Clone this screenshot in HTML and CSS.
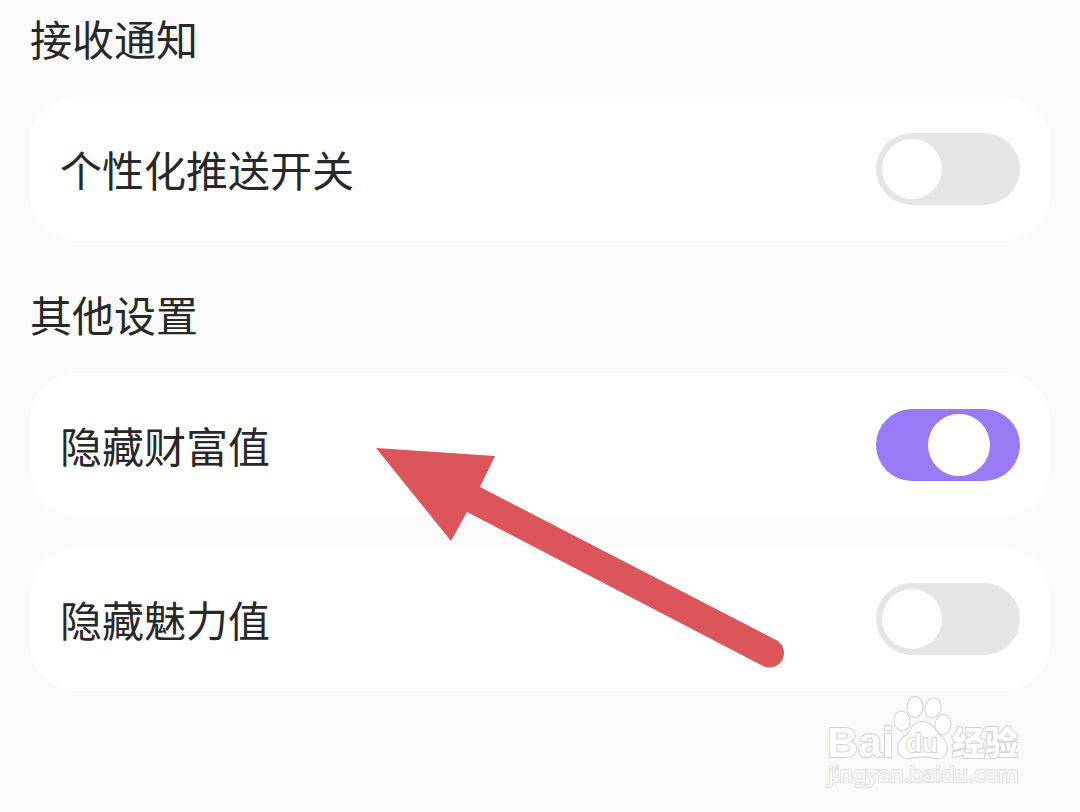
FILE: index.html
```html
<!DOCTYPE html>
<html lang="zh-CN">
<head>
	<meta charset="UTF-8">
	<meta name="viewport" content="width=device-width, initial-scale=1">
	<title>设置</title>
	<link rel="stylesheet" href="styles.css">
</head>
<body>
<main class="settings">
	<section class="group">
		<h2 class="group-title">接收通知</h2>
		<div class="card">
			<label for="push">个性化推送开关</label>
			<input type="checkbox" class="switch" id="push">
		</div>
	</section>
	<section class="group">
		<h2 class="group-title">其他设置</h2>
		<div class="card">
			<label for="wealth">隐藏财富值</label>
			<input type="checkbox" class="switch" id="wealth" checked>
			<!-- 箭头 -->
			<svg class="arrow" width="410" height="222" viewBox="0 0 410 222" aria-hidden="true">
				<path d="M0 0 119 8 104 39 400 192A14 14 0 0 1 387 218L91 64 75 93Z"/>
			</svg>
		</div>
		<div class="card">
			<label for="charm">隐藏魅力值</label>
			<input type="checkbox" class="switch" id="charm">
		</div>
	</section>
</main>
<!-- 水印 -->
<footer class="watermark">
	<svg width="200" height="100" viewBox="0 0 200 100">
		<ellipse cx="78" cy="26" rx="7.5" ry="9.5" transform="rotate(-10 78 26)"/>
		<ellipse cx="91" cy="12" rx="7.5" ry="10"/>
		<ellipse cx="109" cy="13" rx="7.5" ry="9.5" transform="rotate(15 109 13)"/>
		<ellipse cx="119" cy="29.5" rx="7.5" ry="9.5" transform="rotate(10 119 29.5)"/>
		<path d="M98 27c-6 0-9 4-12 9-4 6-12 9-12 17 0 7 5 11 12 10 8-2 17-2 25 0 7 1 12-3 12-10 0-8-7-11-11-17-3-5-7-9-14-9Z"/>
		<text class="bai" x="3" y="62">Bai</text>
		<text class="du" x="82" y="57">du</text>
		<text class="jingyan" x="128" y="60">经验</text>
		<text class="url" x="4" y="87">jingyan.baidu.com</text>
	</svg>
</footer>
</body>
</html>
```
FILE: styles.css
```css
* {
	box-sizing: border-box;
}

body {
	margin: 0;
	color: #282828;
	font-family: "Noto Sans CJK SC", sans-serif;
	font-size: 42px;
	line-height: 60px;
	background-color: #fafafa;
}

.settings {
	padding: 8px 30px 0;
}

.group {
	margin-bottom: 43px;
}

.group:last-child {
	margin-bottom: 0;
}

.group-title {
	margin: 0 0 29px;
	font-size: 42px;
	font-weight: 400;
}

.card {
	position: relative;
	display: flex;
	align-items: center;
	justify-content: space-between;
	min-height: 144px;
	padding: 36px 30px;
	border-radius: 48px;
	background-color: #fff;
}

.card + .card {
	margin-top: 30px;
}

.switch {
	display: flex;
	align-items: center;
	width: 144px;
	height: 72px;
	margin: 0;
	padding: 0 6px;
	border-radius: 36px;
	appearance: none;
	cursor: pointer;
	background-color: #e5e5e5;
}

.switch::before {
	content: "";
	width: 60px;
	height: 60px;
	border-radius: 50%;
	background-color: #fff;
}

.switch:checked {
	justify-content: flex-end;
	padding-right: 30px;
	background-color: #997af6;
}

.switch:checked::before {
	width: 62px;
	height: 62px;
}

.arrow {
	position: absolute;
	top: 75px;
	left: 346px;
	z-index: 1;
	pointer-events: none;
	fill: #db555a;
}

.watermark {
	display: flex;
	justify-content: flex-end;
	padding: 4px 56px 0;
}

.watermark svg {
	display: block;
	fill: #fff;
	stroke: #d2d2d2;
	stroke-width: 2px;
	paint-order: stroke;
}

.bai {
	font: bold 43px "Liberation Sans", sans-serif;
}

.du {
	font: bold 26px "Liberation Sans", sans-serif;
}

.jingyan {
	font: 900 33px "Noto Sans CJK SC", sans-serif;
}

.url {
	font: 22px "Noto Sans", sans-serif;
	stroke: #dcdcdc;
}
```
